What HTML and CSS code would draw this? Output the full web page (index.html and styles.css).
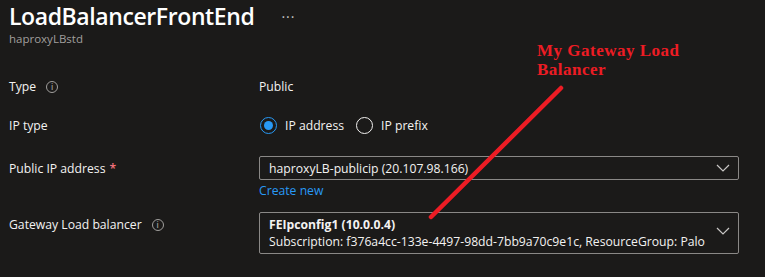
FILE: index.html
```html
<html>
  <head>
    <link rel="stylesheet" href="styles.css">
  </head>
  <body>
    <div class="page">
      <div class="header">
        <h1 class="title">LoadBalancerFrontEnd</h1>
        <span class="more">···</span>
      </div>
      <div class="subtitle">haproxyLBstd</div>

      <div class="form">
        <div class="row row-type">
          <div class="label">Type <span class="info">i</span></div>
          <div class="value">Public</div>
        </div>
        <div class="row row-iptype">
          <div class="label">IP type</div>
          <div class="value radios">
            <span class="radio checked"></span><span class="radio-text">IP address</span>
            <span class="radio"></span><span class="radio-text">IP prefix</span>
          </div>
        </div>
        <div class="row row-pip">
          <div class="label">Public IP address <span class="req">*</span></div>
          <div class="value">
            <div class="select">
              <span>haproxyLB-publicip (20.107.98.166)</span>
              <svg class="chev" width="14" height="8" viewBox="0 0 14 8"><path d="M1 1 L7 7 L13 1" fill="none" stroke="#c8c6c4" stroke-width="1.2"/></svg>
            </div>
            <a class="link">Create new</a>
          </div>
        </div>
        <div class="row row-glb">
          <div class="label">Gateway Load balancer <span class="info">i</span></div>
          <div class="value">
            <div class="select tall">
              <div>
                <div class="strong">FEIpconfig1 (10.0.0.4)</div>
                <div class="nowrap">Subscription: f376a4cc-133e-4497-98dd-7bb9a70c9e1c, ResourceGroup: Palo</div>
              </div>
              <svg class="chev" width="14" height="8" viewBox="0 0 14 8"><path d="M1 1 L7 7 L13 1" fill="none" stroke="#c8c6c4" stroke-width="1.2"/></svg>
            </div>
          </div>
        </div>
      </div>
    </div>

    <div class="note">My Gateway Load<br>Balancer</div>
    <svg class="arrow" width="765" height="277">
      <line x1="431" y1="217" x2="561" y2="88" stroke="#ed1c24" stroke-width="4.5" stroke-linecap="round"/>
    </svg>
  </body>
</html>
```

FILE: styles.css
```css
body {
  margin: 0;
  background-color: #1b1a19;
  color: #f3f2f1;
  font-family: "Open Sans", sans-serif;
  font-size: 12.2px;
  overflow: hidden;
}
.page {
  padding: 0 0 0 9px;
}
.header {
  display: flex;
  align-items: center;
  height: 32px;
}
.title {
  margin: 0;
  font-size: 23px;
  font-weight: 600;
  letter-spacing: -0.4px;
  color: #ffffff;
}
.more {
  margin-left: 27px;
  color: #c8c6c4;
  font-size: 14px;
  letter-spacing: 1px;
}
.subtitle {
  color: #a19f9d;
  font-size: 11.5px;
  margin-top: -1px;
}
.form {
  margin-top: 21px;
}
.row {
  display: flex;
  align-items: flex-start;
}
.label {
  width: 250px;
  flex-shrink: 0;
  display: flex;
  align-items: center;
}
.value {
  flex: 0 0 480px;
}
.row-type {
  height: 39px;
  align-items: center;
}
.row-iptype {
  height: 38px;
  align-items: center;
}
.row-pip {
  margin-top: 12px;
}
.row-pip .label {
  height: 24px;
}
.row-glb {
  margin-top: 13px;
}
.row-glb .label {
  height: 25px;
}
.info {
  display: inline-flex;
  align-items: center;
  justify-content: center;
  width: 10px;
  height: 10px;
  border: 1px solid #a19f9d;
  border-radius: 50%;
  color: #a19f9d;
  font-size: 8px;
  font-weight: 600;
  margin-left: 10px;
  line-height: 1;
}
.req {
  color: #f1707b;
  margin-left: 4px;
  font-weight: 600;
}
.radios {
  display: flex;
  align-items: center;
}
.radio {
  width: 17px;
  height: 17px;
  border: 1px solid #f3f2f1;
  border-radius: 50%;
  box-sizing: border-box;
  display: inline-flex;
  align-items: center;
  justify-content: center;
  margin-left: 1px;
}
.radio.checked {
  border-color: #2899f5;
}
.radio.checked::after {
  content: "";
  width: 9px;
  height: 9px;
  border-radius: 50%;
  background-color: #2899f5;
}
.radio-text {
  margin-left: 8px;
  margin-right: 11px;
}
.select {
  display: flex;
  align-items: center;
  justify-content: space-between;
  border: 1px solid #8a8886;
  border-radius: 2px;
  height: 24px;
  box-sizing: border-box;
  padding: 0 8px 0 9px;
}
.select.tall {
  height: 42px;
  line-height: 17px;
}
.select.tall .chev {
  margin-top: -4px;
}
.nowrap {
  white-space: nowrap;
}
.strong {
  font-weight: 700;
}
.link {
  display: block;
  color: #2899f5;
  margin-top: 2px;
}
.note {
  position: absolute;
  left: 537px;
  top: 41px;
  color: #ed1c24;
  font-family: "Liberation Serif", serif;
  font-weight: 700;
  font-size: 17px;
  letter-spacing: 0.5px;
  line-height: 19px;
}
.arrow {
  position: absolute;
  left: 0;
  top: 0;
}
```
